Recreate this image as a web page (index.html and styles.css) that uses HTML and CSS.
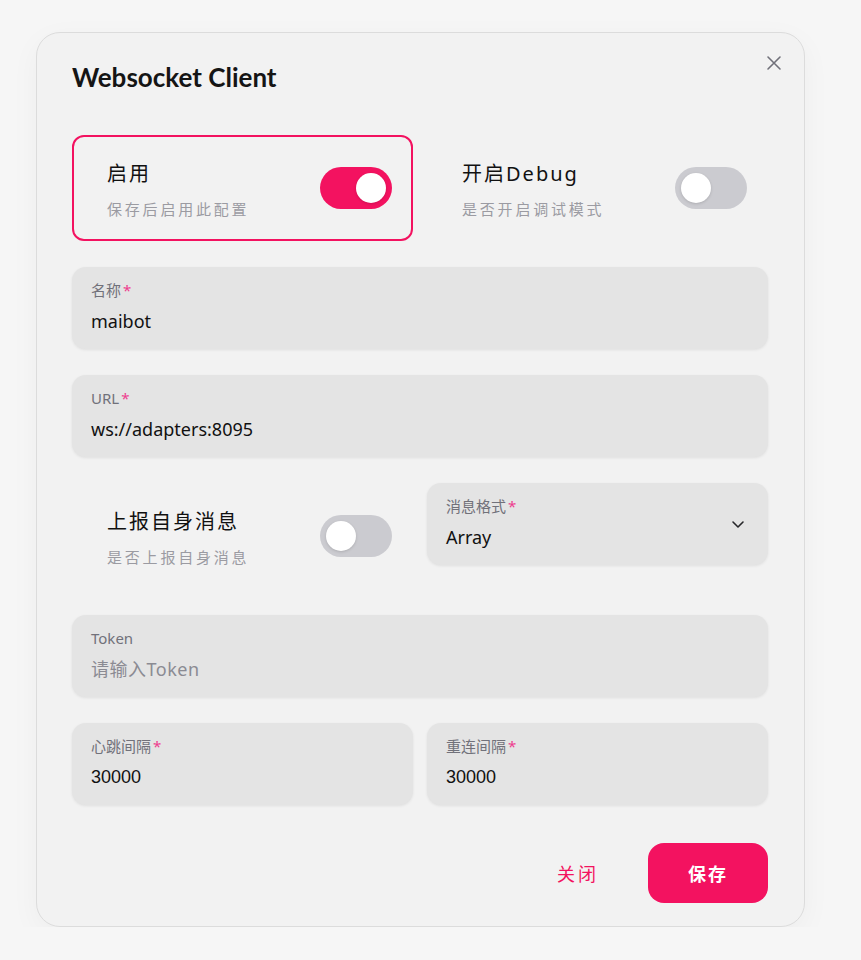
FILE: index.html
```html
<!DOCTYPE html>
<html lang="zh-CN">
    <head>
        <meta charset="UTF-8">
        <title>Websocket Client</title>
        <link rel="stylesheet" href="styles.css">
    </head>
    <body>
        <div class="modal">
            <button class="close" aria-label="关闭">
                <svg width="16" height="16" viewBox="0 0 16 16"><path d="M2 2L14 14M14 2L2 14" stroke="#71717a" stroke-width="1.6" stroke-linecap="round"/></svg>
            </button>
            <h2 class="title">Websocket Client</h2>
            <div class="form">
                <div class="row">
                    <div class="switch_card active">
                        <div class="switch_text">
                            <p class="switch_title">启用</p>
                            <p class="switch_desc">保存后启用此配置</p>
                        </div>
                        <span class="switch on"><span class="knob"></span></span>
                    </div>
                    <div class="switch_card">
                        <div class="switch_text">
                            <p class="switch_title">开启Debug</p>
                            <p class="switch_desc">是否开启调试模式</p>
                        </div>
                        <span class="switch"><span class="knob"></span></span>
                    </div>
                </div>
                <div class="field">
                    <span class="label">名称<em>*</em></span>
                    <span class="value">maibot</span>
                </div>
                <div class="field">
                    <span class="label">URL<em>*</em></span>
                    <span class="value">ws://adapters:8095</span>
                </div>
                <div class="row">
                    <div class="switch_card">
                        <div class="switch_text">
                            <p class="switch_title">上报自身消息</p>
                            <p class="switch_desc">是否上报自身消息</p>
                        </div>
                        <span class="switch"><span class="knob"></span></span>
                    </div>
                    <div class="field select">
                        <span class="label">消息格式<em>*</em></span>
                        <span class="value">Array</span>
                        <svg class="chevron" width="16" height="16" viewBox="0 0 16 16"><path d="M3 6L8 11L13 6" fill="none" stroke="#27272a" stroke-width="1.6" stroke-linecap="round" stroke-linejoin="round"/></svg>
                    </div>
                </div>
                <div class="field">
                    <span class="label">Token</span>
                    <span class="value placeholder">请输入Token</span>
                </div>
                <div class="row">
                    <div class="field">
                        <span class="label">心跳间隔<em>*</em></span>
                        <span class="value num">30000</span>
                    </div>
                    <div class="field">
                        <span class="label">重连间隔<em>*</em></span>
                        <span class="value num">30000</span>
                    </div>
                </div>
            </div>
            <div class="footer">
                <button class="btn_close">关闭</button>
                <button class="btn_save">保存</button>
            </div>
        </div>
    </body>
</html>
```

FILE: styles.css
```css
body{margin:0;background-color:#f6f6f6;font-family:"Noto Sans","Noto Sans CJK SC",sans-serif;color:#111;}
p{margin:0;}
/* モーダル本体 */
.modal{position:relative;box-sizing:border-box;width:769px;margin:32px 0 0 36px;padding:0 36px 23px 35px;background-color:#f2f2f2;border:1px solid #dcdcdc;border-radius:24px;box-shadow:0 8px 30px rgba(0,0,0,0.04);}
.close{position:absolute;top:14px;right:14px;width:32px;height:32px;padding:0;border:none;background:none;display:flex;align-items:center;justify-content:center;cursor:pointer;}
.title{margin:0;padding-top:28px;font-family:Lato,"Noto Sans CJK SC",sans-serif;font-size:26px;line-height:32px;font-weight:bold;color:#151515;}
.form{display:flex;flex-direction:column;gap:26px;margin-top:42px;}
.row{display:grid;grid-template-columns:1fr 1fr;gap:14px;}
/* スイッチ */
.switch_card{box-sizing:border-box;height:106px;display:flex;align-items:center;justify-content:space-between;padding:4px 19px 0 33px;border:2px solid transparent;border-radius:12px;}
.switch_card.active{border-color:#f31260;}
.switch_title{font-family:"Noto Sans","Noto Sans CJK SC",sans-serif;font-size:20px;line-height:28px;letter-spacing:2px;color:#111;}
.switch_desc{margin-top:10px;font-size:15px;line-height:22px;letter-spacing:2.8px;color:#9b9ba2;}
.switch{position:relative;width:72px;height:42px;margin-top:-4px;border-radius:21px;background-color:#cbcbd0;}
.switch.on{background-color:#f31260;}
.knob{position:absolute;top:6px;left:6px;width:30px;height:30px;border-radius:50%;background-color:white;box-shadow:0 1px 3px rgba(0,0,0,0.15);}
.switch.on .knob{left:36px;}
/* 入力欄 */
.field{position:relative;box-sizing:border-box;height:82px;padding:13px 19px 0;display:flex;flex-direction:column;background-color:#e4e4e4;border-radius:14px;box-shadow:0 1px 3px rgba(0,0,0,0.08);}
.label{font-size:15px;line-height:20px;color:#71717a;}
.label em{font-style:normal;color:#ee3d8f;margin-left:2px;}
.value{margin-top:8px;font-size:18px;line-height:26px;color:#111;}
.value.num{font-family:"Liberation Sans",sans-serif;}
.placeholder{color:#8b8b93;letter-spacing:0.5px;}
.select .chevron{position:absolute;right:22px;top:33px;}
/* フッター */
.footer{display:flex;justify-content:flex-end;align-items:center;gap:30px;margin-top:38px;}
.btn_close{width:80px;height:60px;border:none;background:none;font-family:"Noto Sans CJK SC",sans-serif;font-size:18px;letter-spacing:3px;color:#f31260;cursor:pointer;}
.btn_save{width:120px;height:60px;border:none;border-radius:16px;background-color:#f31260;font-family:"Noto Sans CJK SC",sans-serif;font-size:18px;font-weight:bold;color:white;letter-spacing:2px;cursor:pointer;}
```
